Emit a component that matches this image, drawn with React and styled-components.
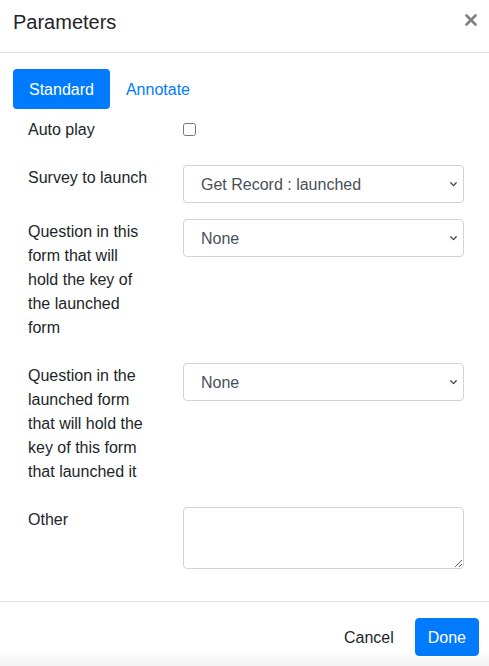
import React from 'react';
import styled, { createGlobalStyle } from 'styled-components';

const GlobalStyle = createGlobalStyle`
  html, body {
    margin: 0;
    padding: 0;
    background: #fff;
  }
  body {
    font-family: "Liberation Sans", Arial, sans-serif;
    font-size: 16px;
    line-height: 24px;
    color: #212529;
  }
  * {
    box-sizing: border-box;
  }
`;

const Modal = styled.div`
  width: 489px;
  min-height: 666px;
  display: flex;
  flex-direction: column;
  position: relative;
  overflow: hidden;

  &::after {
    content: '';
    position: absolute;
    left: 0;
    right: 0;
    bottom: 0;
    height: 22px;
    background: linear-gradient(to bottom, rgba(0, 0, 0, 0), rgba(0, 0, 0, 0.07));
    pointer-events: none;
  }
`;

const Header = styled.div`
  height: 53px;
  padding: 7px 12px 0 13px;
  display: flex;
  justify-content: space-between;
  align-items: flex-start;
  border-bottom: 1px solid #dee2e6;
`;

const Title = styled.h5`
  margin: 0;
  font-size: 20px;
  font-weight: 500;
  line-height: 30px;
  color: #212529;
`;

const Close = styled.button`
  border: 0;
  background: transparent;
  padding: 0;
  margin-top: 7px;
  width: 12px;
  height: 12px;
  display: flex;
  color: #808080;
  cursor: pointer;
`;

const Body = styled.div`
  padding: 16px 25px 32px 13px;
`;

const Pills = styled.div`
  display: flex;
  margin-bottom: 8px;
`;

const Pill = styled.a`
  display: block;
  padding: 9px 16px 7px;
  border-radius: 4px;
  font-size: 16px;
  line-height: 24px;
  text-decoration: none;
  cursor: pointer;
  color: ${p => (p.$active ? '#fff' : '#007bff')};
  background: ${p => (p.$active ? '#007bff' : 'transparent')};
`;

const Form = styled.div`
  padding-left: 15px;
  display: flex;
  flex-direction: column;
  gap: 16px;
`;

const Row = styled.div`
  display: grid;
  grid-template-columns: 122px 1fr;
  column-gap: 33px;
  align-items: start;
`;

const Label = styled.label`
  display: block;
  padding-top: 1px;
  margin-bottom: 7px;
  font-size: 16px;
  line-height: 24px;
`;

const Checkbox = styled.input`
  margin: 6px 0 0 0;
  width: 13px;
  height: 13px;
`;

const SelectWrap = styled.div`
  position: relative;
`;

const Select = styled.select`
  appearance: none;
  -webkit-appearance: none;
  width: 100%;
  height: 38px;
  padding: 7px 28px 5px 17px;
  font-family: inherit;
  font-size: 16px;
  line-height: 24px;
  color: #495057;
  background: #fff;
  border: 1px solid #ced4da;
  border-radius: 4px;
`;

const Chevron = styled.svg`
  position: absolute;
  right: 7px;
  top: 17px;
  width: 7px;
  height: 5px;
  pointer-events: none;
`;

const TextArea = styled.textarea`
  display: block;
  width: 100%;
  height: 62px;
  padding: 6px 12px;
  font-family: inherit;
  font-size: 16px;
  line-height: 24px;
  color: #495057;
  border: 1px solid #ced4da;
  border-radius: 4px;
  resize: vertical;
`;

const Footer = styled.div`
  border-top: 1px solid #dee2e6;
  padding: 12px 6px 12px 12px;
  display: flex;
  justify-content: flex-end;
  align-items: center;
`;

const Button = styled.button`
  margin: 4px;
  padding: 7px 12px 5px;
  height: 38px;
  border: 1px solid ${p => (p.$primary ? '#007bff' : 'transparent')};
  border-radius: 4px;
  background: ${p => (p.$primary ? '#007bff' : 'transparent')};
  color: ${p => (p.$primary ? '#fff' : '#212529')};
  font-family: inherit;
  font-size: 16px;
  line-height: 24px;
  cursor: pointer;
`;

const SelectBox = ({ value }) => (
    <SelectWrap>
        <Select defaultValue={value}>
            <option>{value}</option>
        </Select>
        <Chevron viewBox="0 0 7 5">
            <path d="M0.8 0.8 L3.5 3.6 L6.2 0.8" fill="none" stroke="#444" strokeWidth="1.3" strokeLinecap="round" strokeLinejoin="round" />
        </Chevron>
    </SelectWrap>
);

const App = () => {
    return (
        <>
            <GlobalStyle />
            <Modal>
                <Header>
                    <Title>Parameters</Title>
                    <Close aria-label="Close">
                        <svg viewBox="0 0 12 12" width="12" height="12">
                            <path d="M1.5 1.5 L10.5 10.5 M10.5 1.5 L1.5 10.5" stroke="currentColor" strokeWidth="2.6" strokeLinecap="round" />
                        </svg>
                    </Close>
                </Header>
                <Body>
                    <Pills>
                        <Pill $active>Standard</Pill>
                        <Pill>Annotate</Pill>
                    </Pills>
                    <Form>
                        <Row>
                            <Label>Auto play</Label>
                            <div>
                                <Checkbox type="checkbox" />
                            </div>
                        </Row>
                        <Row>
                            <Label>Survey to launch</Label>
                            <SelectBox value="Get Record : launched" />
                        </Row>
                        <Row>
                            <Label>Question in this form that will hold the key of the launched form</Label>
                            <SelectBox value="None" />
                        </Row>
                        <Row>
                            <Label>Question in the launched form that will hold the key of this form that launched it</Label>
                            <SelectBox value="None" />
                        </Row>
                        <Row>
                            <Label>Other</Label>
                            <TextArea />
                        </Row>
                    </Form>
                </Body>
                <Footer>
                    <Button>Cancel</Button>
                    <Button $primary>Done</Button>
                </Footer>
            </Modal>
        </>
    );
};

export default App;
